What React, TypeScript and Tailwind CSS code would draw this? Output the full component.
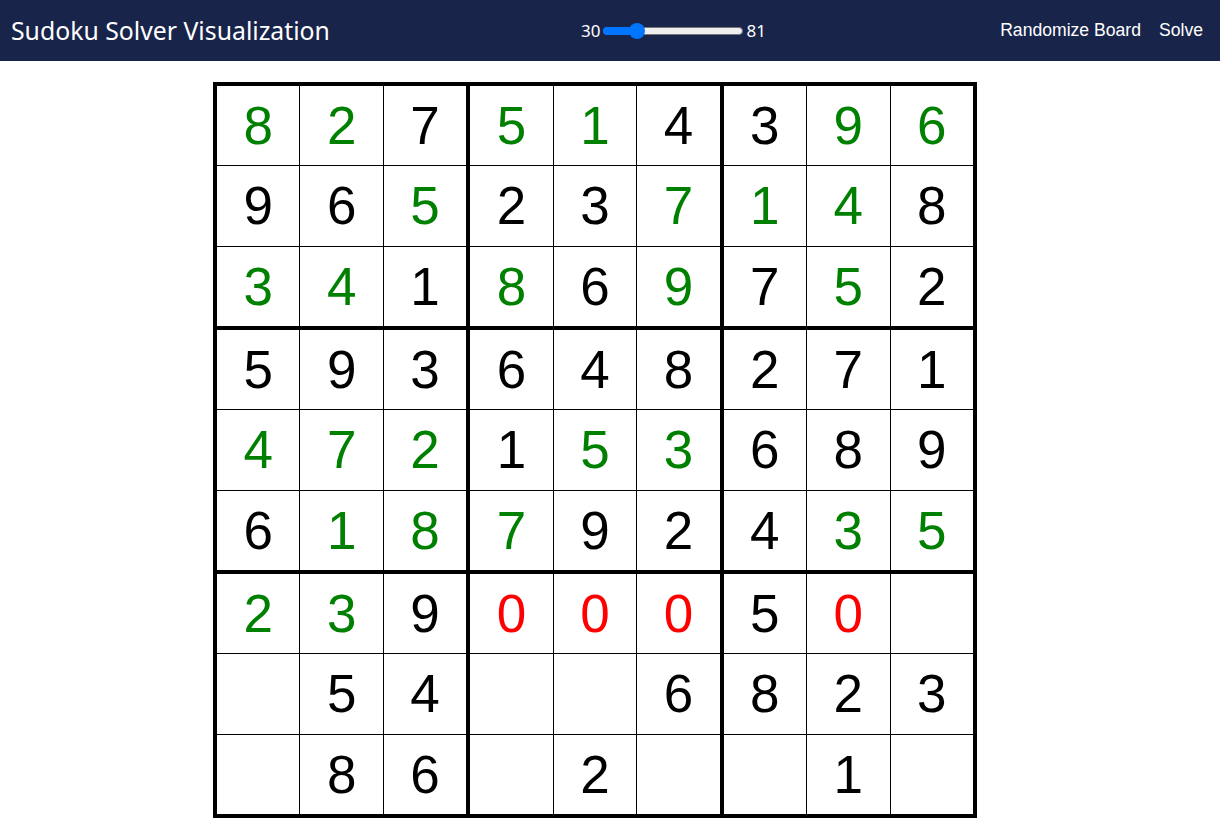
import React from "react";

type C = [string, "g" | "k" | "r" | ""];

const rows: string[] = [
  "8g 2g 7k 5g 1g 4k 3k 9g 6g",
  "9k 6k 5g 2k 3k 7g 1g 4g 8k",
  "3g 4g 1k 8g 6k 9g 7k 5g 2k",
  "5k 9k 3k 6k 4k 8k 2k 7k 1k",
  "4g 7g 2g 1k 5g 3g 6k 8k 9k",
  "6k 1g 8g 7g 9k 2k 4k 3g 5g",
  "2g 3g 9k 0r 0r 0r 5k 0r _",
  "_ 5k 4k _ _ 6k 8k 2k 3k",
  "_ 8k 6k _ 2k _ _ 1k _",
];

const colorCls: Record<string, string> = {
  g: "text-[#008000]",
  k: "text-black",
  r: "text-[#ff0000]",
  "": "",
};

export default function App() {
  const board: C[][] = rows.map((r) =>
    r.split(" ").map((t) => (t === "_" ? ["", ""] : [t[0], t[1] as any]))
  );
  return (
    <div className="min-h-screen bg-white">
      <header className="h-[61px] bg-[#18244a] flex items-center pl-[11px] pr-[17px] text-white">
        <div className="w-[570px] shrink-0 text-[24.8px] font-['Noto_Sans',sans-serif] leading-none pb-[1px]">
          Sudoku Solver Visualization
        </div>
        <div className="flex items-center font-['Noto_Sans',sans-serif] text-[17px] leading-none">
          <span>30</span>
          <div className="relative w-[140px] h-[16px] mx-[3px] flex items-center">
            <div className="w-full h-[8px] rounded-full bg-[#efefef] border border-[#767676]" />
            <div className="absolute left-0 top-[4px] h-[8px] w-[34px] rounded-l-full bg-[#0075ff]" />
            <div className="absolute left-[26px] top-0 w-[16px] h-[16px] rounded-full bg-[#0075ff]" />
          </div>
          <span>81</span>
        </div>
        <div className="flex-1" />
        <div className="flex items-center gap-[18px] text-[17.6px] font-['Liberation_Sans',Arial,sans-serif] leading-none">
          <span>Randomize Board</span>
          <span>Solve</span>
        </div>
      </header>
      <div className="pt-[21px] pl-[213px]">
        <div className="w-[764px] h-[736px] border-4 border-black flex flex-col">
          {board.map((row, ri) => (
            <div
              key={ri}
              className={
                "flex flex-1 " +
                (ri === 8
                  ? ""
                  : ri === 2 || ri === 5
                  ? "border-b-4 border-black"
                  : "border-b border-black")
              }
            >
              {row.map((c, ci) => (
                <div
                  key={ci}
                  className={
                    "flex-1 flex items-center justify-center text-[53px] leading-none font-['Liberation_Sans',Arial,sans-serif] " +
                    colorCls[c[1]] +
                    " " +
                    (ci === 8
                      ? ""
                      : ci === 2 || ci === 5
                      ? "border-r-4 border-black"
                      : "border-r border-black")
                  }
                >
                  {c[0]}
                </div>
              ))}
            </div>
          ))}
        </div>
      </div>
    </div>
  );
}
